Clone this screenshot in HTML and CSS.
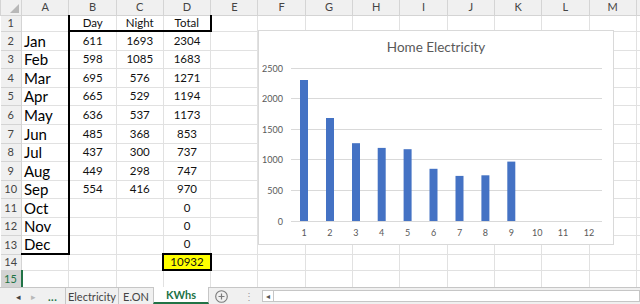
FILE: index.html
```html
<!DOCTYPE html>
<html>
<head>
<meta charset="utf-8">
<link rel="stylesheet" href="styles.css">
</head>
<body>
<div class="sheet-wrap">
<table class="sheet">
<colgroup><col class="c-rh"><col class="c"><col class="c"><col class="c"><col class="c"><col class="c"><col class="c"><col class="c"><col class="c"><col class="c"><col class="c"><col class="c"><col class="c"><col class="c"><col class="c"></colgroup>
<thead>
<tr class="r-head"><th class="corner"></th><th>A</th><th>B</th><th>C</th><th>D</th><th>E</th><th>F</th><th>G</th><th>H</th><th>I</th><th>J</th><th>K</th><th>L</th><th>M</th><th></th></tr>
</thead>
<tbody>
<tr class="r-1"><th class="rh">1</th><td class="tr"></td><td class="num tb">Day</td><td class="num tb">Night</td><td class="num tb tr">Total</td><td></td><td></td><td></td><td></td><td></td><td></td><td></td><td></td><td></td><td></td></tr>
<tr class="r-a"><th class="rh">2</th><td class="month tr">Jan</td><td class="num">611</td><td class="num">1693</td><td class="num">2304</td><td></td><td></td><td></td><td></td><td></td><td></td><td></td><td></td><td></td><td></td></tr>
<tr class="r-b"><th class="rh">3</th><td class="month tr">Feb</td><td class="num">598</td><td class="num">1085</td><td class="num">1683</td><td></td><td></td><td></td><td></td><td></td><td></td><td></td><td></td><td></td><td></td></tr>
<tr class="r-a"><th class="rh">4</th><td class="month tr">Mar</td><td class="num">695</td><td class="num">576</td><td class="num">1271</td><td></td><td></td><td></td><td></td><td></td><td></td><td></td><td></td><td></td><td></td></tr>
<tr class="r-b"><th class="rh">5</th><td class="month tr">Apr</td><td class="num">665</td><td class="num">529</td><td class="num">1194</td><td></td><td></td><td></td><td></td><td></td><td></td><td></td><td></td><td></td><td></td></tr>
<tr class="r-a"><th class="rh">6</th><td class="month tr">May</td><td class="num">636</td><td class="num">537</td><td class="num">1173</td><td></td><td></td><td></td><td></td><td></td><td></td><td></td><td></td><td></td><td></td></tr>
<tr class="r-a"><th class="rh">7</th><td class="month tr">Jun</td><td class="num">485</td><td class="num">368</td><td class="num">853</td><td></td><td></td><td></td><td></td><td></td><td></td><td></td><td></td><td></td><td></td></tr>
<tr class="r-b"><th class="rh">8</th><td class="month tr">Jul</td><td class="num">437</td><td class="num">300</td><td class="num">737</td><td></td><td></td><td></td><td></td><td></td><td></td><td></td><td></td><td></td><td></td></tr>
<tr class="r-a"><th class="rh">9</th><td class="month tr">Aug</td><td class="num">449</td><td class="num">298</td><td class="num">747</td><td></td><td></td><td></td><td></td><td></td><td></td><td></td><td></td><td></td><td></td></tr>
<tr class="r-b"><th class="rh">10</th><td class="month tr">Sep</td><td class="num">554</td><td class="num">416</td><td class="num">970</td><td></td><td></td><td></td><td></td><td></td><td></td><td></td><td></td><td></td><td></td></tr>
<tr class="r-a"><th class="rh">11</th><td class="month tr">Oct</td><td></td><td></td><td class="num">0</td><td></td><td></td><td></td><td></td><td></td><td></td><td></td><td></td><td></td><td></td></tr>
<tr class="r-b"><th class="rh">12</th><td class="month tr">Nov</td><td></td><td></td><td class="num">0</td><td></td><td></td><td></td><td></td><td></td><td></td><td></td><td></td><td></td><td></td></tr>
<tr class="r-a"><th class="rh">13</th><td class="month tr tb">Dec</td><td></td><td></td><td class="num tb">0</td><td></td><td></td><td></td><td></td><td></td><td></td><td></td><td></td><td></td><td></td></tr>
<tr class="r-14"><th class="rh">14</th><td></td><td></td><td class="tr"></td><td class="num total tr tb">10932</td><td></td><td></td><td></td><td></td><td></td><td></td><td></td><td></td><td></td><td></td></tr>
<tr class="r-15"><th class="rh sel">15</th><td></td><td></td><td></td><td></td><td></td><td></td><td></td><td></td><td></td><td></td><td></td><td></td><td></td><td></td></tr>
</tbody>
</table>

<div class="chart">
<svg width="354" height="213" viewBox="0 0 354 213">
  <text class="title" x="177" y="21" text-anchor="middle">Home Electricity</text>
  <g class="grid">
    <line x1="32" y1="37.5" x2="343" y2="37.5"/>
    <line x1="32" y1="67.5" x2="343" y2="67.5"/>
    <line x1="32" y1="98.5" x2="343" y2="98.5"/>
    <line x1="32" y1="128.5" x2="343" y2="128.5"/>
    <line x1="32" y1="159.5" x2="343" y2="159.5"/>
    <line x1="32" y1="190.5" x2="343" y2="190.5"/>
  </g>
  <g class="ylab" text-anchor="end">
    <text x="24" y="40.5">2500</text>
    <text x="24" y="70.5">2000</text>
    <text x="24" y="101.5">1500</text>
    <text x="24" y="131.5">1000</text>
    <text x="24" y="162.5">500</text>
    <text x="24" y="193.5">0</text>
  </g>
  <g class="bars">
    <rect x="41" y="49" width="8" height="141"/>
    <rect x="67" y="87" width="8" height="103"/>
    <rect x="93" y="112.2" width="8" height="77.8"/>
    <rect x="118.7" y="116.9" width="8" height="73.1"/>
    <rect x="144.6" y="118.2" width="8" height="71.8"/>
    <rect x="170.5" y="137.8" width="8" height="52.2"/>
    <rect x="196.5" y="144.9" width="8" height="45.1"/>
    <rect x="222.4" y="144.3" width="8" height="45.7"/>
    <rect x="248.3" y="130.6" width="8" height="59.4"/>
  </g>
  <g class="xlab" text-anchor="middle">
    <text x="45" y="204.5">1</text>
    <text x="70.9" y="204.5">2</text>
    <text x="96.8" y="204.5">3</text>
    <text x="122.7" y="204.5">4</text>
    <text x="148.6" y="204.5">5</text>
    <text x="174.5" y="204.5">6</text>
    <text x="200.5" y="204.5">7</text>
    <text x="226.4" y="204.5">8</text>
    <text x="252.3" y="204.5">9</text>
    <text x="278.2" y="204.5">10</text>
    <text x="304.1" y="204.5">11</text>
    <text x="330" y="204.5">12</text>
  </g>
</svg>
</div>
</div>

<div class="tabbar">
  <div class="nav">
    <span class="arrow">&#9666;</span>
    <span class="arrow dim">&#9656;</span>
    <span class="more">...</span>
  </div>
  <div class="tab t-elec">Electricity</div>
  <div class="tab t-eon">E.ON</div>
  <div class="tab t-kwh active">KWhs</div>
  <div class="add">
    <svg width="13" height="13" viewBox="0 0 13 13"><circle cx="6.5" cy="6.5" r="5.8" fill="none" stroke="#7a7a7a" stroke-width="1.1"/><path d="M6.5 3.5v6M3.5 6.5h6" stroke="#7a7a7a" stroke-width="1.2"/></svg>
  </div>
  <div class="dots">&#8942;</div>
  <div class="hscroll"><span class="sarrow">&#9666;</span></div>
</div>
</body>
</html>
```

FILE: styles.css
```css
html, body {
  margin: 0;
  padding: 0;
  width: 640px;
  height: 304px;
  overflow: hidden;
  background: #fff;
  font-family: Lato, "Liberation Sans", sans-serif;
}

.sheet-wrap {
  position: relative;
  width: 640px;
  height: 287px;
  overflow: hidden;
}

.sheet {
  border-collapse: collapse;
  table-layout: fixed;
  width: 683px;
}

.c-rh { width: 21px; }
.c { width: 47.3px; }

.sheet td, .sheet th {
  padding: 0;
  border: 1px solid #e1e1e1;
  overflow: hidden;
  white-space: nowrap;
  line-height: 12px;
}

.r-head { height: 15px; }
.r-1 { height: 16px; }
.r-a { height: 19px; }
.r-b { height: 18px; }
.r-14 { height: 16px; }
.r-15 { height: 17px; }

.r-head th {
  background: #f0f0f0;
  border-color: #d4d4d4;
  color: #444;
  font-weight: normal;
  font-size: 11px;
  border-top: none;
}

.corner {
  position: relative;
}
.corner::after {
  content: "";
  position: absolute;
  right: 2px;
  bottom: 2px;
  border-style: solid;
  border-width: 0 0 9px 9px;
  border-color: transparent transparent #b8b8b8 transparent;
}

.rh {
  background: #f0f0f0;
  border-color: #d4d4d4 !important;
  border-left: none !important;
  color: #444;
  font-weight: normal;
  font-size: 11px;
  text-align: center;
}

.rh.sel {
  background: #d3d3d3;
  color: #217346;
  border-right: 2px solid #217346 !important;
}

.num {
  text-align: center;
  font-size: 11.5px;
  color: #111;
}

.month {
  font-size: 15px;
  line-height: 14px !important;
  color: #000;
  padding-left: 2px !important;
  text-align: left;
}

.sheet td.tr { border-right: 2px solid #000; }
.sheet td.tb { border-bottom: 2px solid #000; }

.total {
  background: #ffff00;
}

/* chart overlay */
.chart {
  position: absolute;
  left: 259px;
  top: 31px;
  width: 354px;
  height: 213px;
  background: #fff;
  box-shadow: 0 0 0 1px #d9d9d9;
}
.chart svg { display: block; }
.chart .title {
  font-size: 13.5px;
  fill: #595959;
  font-family: Lato, "Liberation Sans", sans-serif;
}
.chart .grid line {
  stroke: #d9d9d9;
  stroke-width: 1;
}
.chart .ylab text, .chart .xlab text {
  font-size: 9px;
  fill: #595959;
  font-family: Lato, "Liberation Sans", sans-serif;
}
.chart .bars rect { fill: #4472c4; }

/* tab bar */
.tabbar {
  height: 17px;
  background: #f0f0f0;
  border-top: 1px solid #c6c6c6;
  box-sizing: border-box;
  display: flex;
  align-items: stretch;
  font-size: 11px;
  color: #444;
}

.nav {
  width: 65px;
  display: flex;
  align-items: center;
  padding-left: 16px;
  box-sizing: border-box;
  gap: 10px;
}
.arrow { font-size: 9px; color: #444; }
.arrow.dim { color: #b8b8b8; }
.more { color: #217346; font-weight: bold; letter-spacing: 0.5px; margin-left: 2px; }

.tab {
  display: flex;
  align-items: center;
  justify-content: center;
  border-left: 1px solid #c6c6c6;
  box-sizing: border-box;
}
.t-elec { width: 53px; }
.t-eon { width: 35px; }
.t-kwh { width: 56px; border-right: 1px solid #c6c6c6; }
.tab.active {
  background: #fff;
  color: #217346;
  font-weight: bold;
  border-bottom: 2px solid #217346;
  margin-top: -1px;
}

.add {
  width: 20px;
  display: flex;
  align-items: center;
  justify-content: center;
  margin-left: 2px;
}
.dots {
  width: 26px;
  display: flex;
  align-items: center;
  justify-content: center;
  color: #9a9a9a;
  font-size: 10px;
  margin-left: 5px;
}
.hscroll {
  flex: 1;
  margin: 2px 0 2px 0;
  background: #fff;
  border: 1px solid #c6c6c6;
  display: flex;
  align-items: center;
}
.sarrow {
  font-size: 8px;
  color: #555;
  width: 10px;
  text-align: center;
  border-right: 1px solid #c6c6c6;
  height: 100%;
  display: flex;
  align-items: center;
  justify-content: center;
}
```
